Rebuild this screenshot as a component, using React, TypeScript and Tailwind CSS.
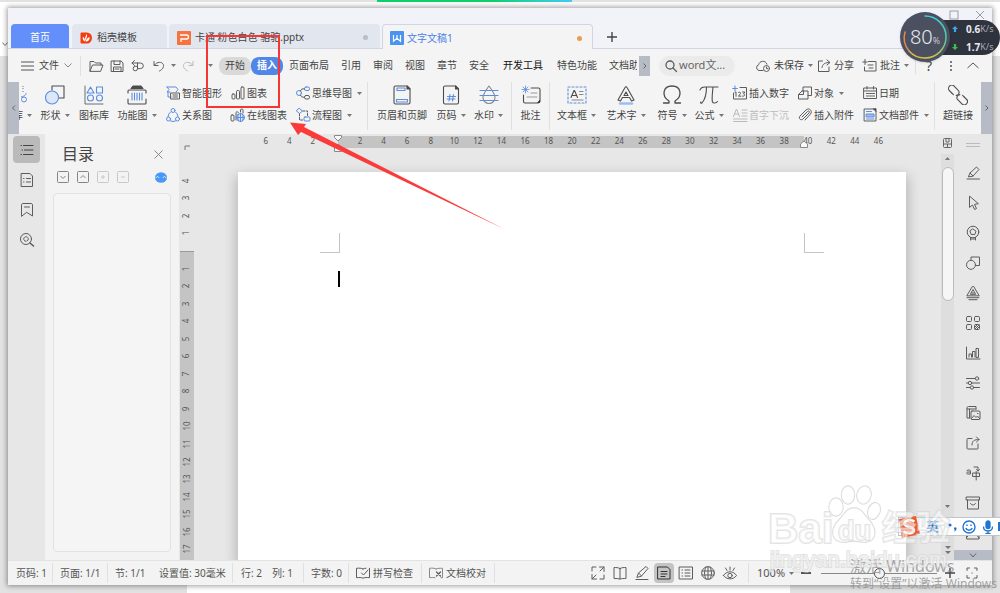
import React from "react";

type Kids = { children?: React.ReactNode };

/* 16-unit line icon */
function S({ children, className = "size-4" }: Kids & { className?: string }) {
  return (
    <svg viewBox="0 0 16 16" className={`shrink-0 ${className}`} fill="none" stroke="#5c5c5c" strokeWidth="1" strokeLinecap="round" strokeLinejoin="round" aria-hidden="true">
      {children}
    </svg>
  );
}

/* 20-unit line icon used by the tall ribbon buttons */
function L({ children }: Kids) {
  return (
    <svg viewBox="0 0 20 20" className="size-5 shrink-0" fill="none" stroke="#4c4c4c" strokeWidth="1.1" strokeLinecap="round" strokeLinejoin="round" aria-hidden="true">
      {children}
    </svg>
  );
}

const B = "#5b8de0";

function Caret() {
  return (
    <svg viewBox="0 0 5 3" className="ml-1 h-[3px] w-[5px] shrink-0" aria-hidden="true">
      <path d="M0 0h5L2.5 3z" fill="#777" />
    </svg>
  );
}

function Big({ icon, label, caret, w }: { icon: React.ReactNode; label: string; caret?: boolean; w: string }) {
  return (
    <button className={`flex shrink-0 flex-col items-center pt-[3px] ${w}`}>
      {icon}
      <span className="flex items-center leading-5 whitespace-nowrap">
        {label}
        {caret && <Caret />}
      </span>
    </button>
  );
}

function Small({ icon, label, caret, muted }: { icon: React.ReactNode; label: string; caret?: boolean; muted?: boolean }) {
  return (
    <button className={`flex h-[22px] items-center gap-px whitespace-nowrap ${muted ? "text-[#bdbdbd]" : ""}`}>
      {icon}
      {label}
      {caret && <Caret />}
    </button>
  );
}

function Stack({ children, w }: Kids & { w: string }) {
  return <div className={`flex shrink-0 flex-col ${w}`}>{children}</div>;
}

function Sep({ className = "h-12" }: { className?: string }) {
  return <div className={`w-px shrink-0 bg-[#e0e0e0] ${className}`} />;
}

/* ---------- tabs ---------- */
function TabBar() {
  return (
    <header className="flex h-[41px] shrink-0 items-end border-b border-[#cfd6e2] bg-[#f1f3f8] pl-[3px]">
      <button className="h-6 w-[58px] rounded-t bg-[#628ffa] pt-[3px] text-white">首页</button>
      <button className="ml-[3px] flex h-6 w-[95px] items-center gap-[5px] rounded-t bg-[#e2e6ef] pt-[3px] pl-2">
        <svg viewBox="0 0 12 12" className="size-3">
          <path d="M1.5.5H7a5 5.500 0 0 1 0 11H1.500a1 1 0 0 1-1-1v-9a1 1 0 0 1 1-1z" fill="#f23f10" />
          <path d="M6.500 2c1 1.800.6 3.500-.5 5L5 9.500C4 8.500 5.800 4 6.500 2zM3 4.800c1.300.7 1.700 2 1.700 4.400C3 8.500 2.300 6.800 3 4.800zM9.500 5c.5 2.500-1 4.500-3.800 4.500C6 7.500 7.500 5.800 9.500 5z" fill="#fff" />
        </svg>
        稻壳模板
      </button>
      <button className="ml-[2px] flex h-6 w-[211px] items-center gap-1 rounded-t bg-[#e2e6ef] pt-[3px] pr-3 pl-2">
        <svg viewBox="0 0 14 14" className="size-[14px]">
          <rect width="14" height="14" rx="1" fill="#f9713f" />
          <path d="M3 4h6.500a1.600 1.600 0 0 1 0 4H4v3" fill="none" stroke="#fff" strokeWidth="1.300" />
        </svg>
        卡通 粉色白色 骆驼.pptx
        <span className="ml-auto size-[5px] rounded-full bg-[#b9bec9]" />
      </button>
      <button className="ml-[2px] -mb-px flex h-[25px] w-[211px] items-center gap-[3px] rounded-t border border-b-0 border-[#cfd6e2] bg-[#f4f4f4] pt-[2px] pr-[10px] pl-[7px] text-[#4a80e8]">
        <svg viewBox="0 0 14 14" className="size-[14px]">
          <rect width="14" height="14" rx="1" fill="#4b93f0" />
          <path d="M3.500 4v6.200l3.500-3 3.500 3V4M7 4v3" fill="none" stroke="#fff" strokeWidth="1.200" />
        </svg>
        文字文稿1
        <span className="ml-auto size-[5px] rounded-full bg-[#eb9c50]" />
      </button>
      <button aria-label="新建" className="mb-[6px] ml-[14px]">
        <svg viewBox="0 0 10 10" className="size-[10px]"><path d="M5 0v10M0 5h10" stroke="#444" strokeWidth="1.400" /></svg>
      </button>
      <div className="mr-[7px] mb-auto ml-auto flex gap-4 pt-[2px]">
        <button aria-label="最大化"><svg viewBox="0 0 10 10" className="size-[10px]"><rect x="1" y="1" width="8" height="8" fill="none" stroke="#9a9da4" /></svg></button>
        <button aria-label="关闭"><svg viewBox="0 0 10 10" className="size-[10px]"><path d="M1 1l8 8M9 1L1 9" stroke="#9a9da4" /></svg></button>
      </div>
    </header>
  );
}

/* ---------- menu ---------- */
function MenuBar() {
  return (
    <nav className="flex h-[33px] shrink-0 items-center whitespace-nowrap">
      <button className="ml-[13px] flex items-center gap-[5px]">
        <svg viewBox="0 0 13 10" className="h-[10px] w-[13px]"><path d="M0 1h13M0 5h13M0 9h13" stroke="#555" /></svg>
        文件
        <svg viewBox="0 0 8 5" className="h-[5px] w-2"><path d="M.5.5L4 4 7.500.5" fill="none" stroke="#888" /></svg>
      </button>
      <Sep className="ml-2 h-5 bg-[#d5d5d5]" />
      <div className="ml-[7px] flex items-center gap-[5px]">
        <button aria-label="打开"><S><path d="M2 13V3.500h4l1.500 1.500H13v2M2 13l2.500-6H15l-2.300 6z" /></S></button>
        <button aria-label="保存"><S><path d="M2.500 3h9.500l2 2v8.500H2.500zM5 3v3.500h6V3M4.500 13.500V9h7.500v4.500M6 11h4" /></S></button>
        <button aria-label="输出"><S><path d="M2 5h8.500a2.800 2.800 0 0 1 0 5.600H7.500M4.500 2.500L2 5l2.500 2.500M7.500 5v5.600a2.200 2.200 0 1 1-2.200-2.200h2" /></S></button>
        <button aria-label="撤消"><S><path d="M3 3.500v4h4M3.500 7C6 3.500 11 3.500 12.300 6.500c1 2.500-.8 5-3.800 6.500" /></S></button>
      </div>
      <Caret />
      <button aria-label="恢复" className="ml-1"><S><path stroke="#bbb" d="M13 3.500v4H9M12.500 7C10 3.500 5 3.500 3.700 6.500c-1 2.500.8 5 3.800 6.500" /></S></button>
      <span className="ml-2"><Caret /></span>
      <div className="ml-[6px] flex items-center">
        <button className="h-[18px] w-8 rounded-lg bg-[#d9d9d9]">开始</button>
        <button className="h-[18px] w-8 rounded-lg bg-[#4f86e8] font-bold text-white">插入</button>
      </div>
      <div className="ml-[6px] flex items-center gap-3">
        <button>页面布局</button>
        <button>引用</button>
        <button>审阅</button>
        <button>视图</button>
        <button>章节</button>
        <button>安全</button>
        <button className="ml-[2px] text-[#111]">开发工具</button>
        <button className="ml-[2px]">特色功能</button>
        <button className="w-7 overflow-hidden">文档助手</button>
      </div>
      <button aria-label="更多选项卡" className="ml-[2px] flex h-5 w-[11px] items-center justify-center bg-[#b7bbc3]">
        <svg viewBox="0 0 4 6" className="h-[6px] w-1"><path d="M.5.5L3 3 .5 5.500" fill="none" stroke="#666" /></svg>
      </button>
      <label className="ml-[9px] flex h-5 w-[76px] items-center rounded-full bg-[#ebebeb] pl-1">
        <S><circle cx="7" cy="7" r="4" strokeWidth="1.300" /><path strokeWidth="1.300" d="M10 10l3.500 3.500" /></S>
        <input aria-label="搜索" defaultValue="word文..." className="w-12 bg-transparent text-[11px] text-[#666] outline-none" />
      </label>
      <div className="ml-auto flex items-center gap-[3px]">
        <button className="flex items-center gap-[3px]">
          <S><path d="M8 12.500H4a3 3 0 0 1-.3-5.800C4 3 10.500 1.500 12 6.200" /><circle cx="11.500" cy="10.500" r="3" /><path d="M11.500 9v1.700h1.300" /></S>
          <span className="flex items-center">未保存<Caret /></span>
        </button>
        <button className="flex items-center gap-[2px]">
          <S><path d="M6.500 3H2.500v10.500H13V9M6 9.500C6.500 6 9 4.500 13.500 4.500M11 2l3 2.500L11 7" /></S>分享
        </button>
        <button className="ml-[5px] flex items-center gap-[2px]">
          <S><path d="M6.500 3.500H14v9.500H2.500V9M6 7h5M7 10h4M3 1.500v5M.7 4h4.600" /></S>
          <span className="flex items-center">批注<Caret /></span>
        </button>
      </div>
      <Sep className="ml-[6px] h-4" />
      <button className="ml-[9px] w-2 text-sm">?</button>
      <button aria-label="更多" className="ml-[14px]"><svg viewBox="0 0 8 12" className="h-3 w-2" fill="#555"><circle cx="4" cy="2" r="1" /><circle cx="4" cy="6" r="1" /><circle cx="4" cy="10" r="1" /></svg></button>
      <button aria-label="收起功能区" className="mr-[13px] ml-3"><svg viewBox="0 0 12 7" className="h-[7px] w-3"><path d="M.5 6L6 1l5.500 5" fill="none" stroke="#555" /></svg></button>
    </nav>
  );
}

/* ---------- ribbon ---------- */
function Ribbon() {
  return (
    <section aria-label="插入" className="flex h-[52px] shrink-0 items-stretch overflow-hidden">
      <button aria-label="向左滚动" className="flex w-[11px] shrink-0 items-center justify-center bg-[#b7bbc6]">
        <svg viewBox="0 0 4 6" className="h-[6px] w-1"><path d="M3 .5L.5 3 3 5.500" fill="none" stroke="#666" /></svg>
      </button>
      <button aria-label="图库" className="flex w-4 shrink-0 flex-col pt-[3px]">
        <svg viewBox="0 0 10 20" className="h-5 w-[10px]" fill="none"><path d="M4 1v3M4 6v2" stroke="#777" strokeDasharray="1 1" /><circle cx="5" cy="14.500" r="2.500" stroke={B} /><path d="M7 8c0 2-1 3-5 4" stroke={B} /></svg>
        <span className="flex h-5 items-center"><span className="flex w-1 justify-end overflow-hidden">库</span><Caret /></span>
      </button>
      <Big w="w-10" label="形状" caret icon={<L><path d="M7 5V1h12v12h-5" /><circle cx="7" cy="12.500" r="6.500" fill="#dce8fa" stroke={B} /></L>} />
      <Big w="w-[38px]" label="图标库" icon={<L><path d="M1 1v18h18" strokeWidth=".8" /><g stroke={B}><path d="M6.500 2L10 8H3z" /><rect x="12.500" y="2" width="6" height="6" /><circle cx="6.500" cy="13" r="3" /><circle cx="15.500" cy="13" r="3" /></g></L>} />
      <Big w="w-12" label="功能图" caret icon={<L><path d="M4 3.500L6 1h8l2 2.500z" fill="#4c4c4c" /><path d="M1 8V6c0-.6.4-1 1-1h16c.6 0 1 .4 1 1v2M1 14v4c0 .6.4 1 1 1h16c.6 0 1-.4 1-1v-4" /><path stroke={B} d="M5 8v7M7.500 8v7M10 8v7M12.500 8v7M15 8v7" /></L>} />
      <Stack w="ml-1 w-[65px]">
        <Small label="智能图形" icon={<S><path stroke={B} d="M2 2h9l2 2.500L11 7M2 2l2 2.500L2 7h3M3 7v5h3" /><rect x="6" y="8" width="8.500" height="6" /><path d="M8 10h4.500M8 12h4.500" /></S>} />
        <Small label="关系图" icon={<S><path stroke={B} d="M5.500 5A6 6 0 0 0 3 9.500M10.500 5A6 6 0 0 1 13 9.500M5.500 14a6 6 0 0 0 5 0" /><circle cx="8" cy="3.500" r="2" stroke={B} /><circle cx="3.500" cy="12" r="2" stroke={B} /><circle cx="12.500" cy="12" r="2" stroke={B} /></S>} />
      </Stack>
      <Stack w="w-[65px]">
        <Small label="图表" icon={<S><rect x="2" y="9" width="3" height="5" rx="1" /><rect x="6.500" y="5.500" width="3" height="8.500" rx="1" /><rect x="11" y="2" width="3" height="12" rx="1" /></S>} />
        <Small label="在线图表" icon={<S><rect x="1" y="8" width="3" height="6" rx="1" /><path d="M6 13V5.500c0-1 2.500-1 2.500 0M10.500 5V3c0-1.300 2.500-1.300 2.500 0v3" /><g stroke={B}><circle cx="10.500" cy="10.500" r="4" fill="#dce8fa" /><path d="M6.500 10.500h8M10.500 6.500v8M8.500 7.500c-1 2-1 4 0 6M12.500 7.500c1 2 1 4 0 6" /></g></S>} />
      </Stack>
      <Stack w="w-[72px]">
        <Small label="思维导图" caret icon={<S><g stroke={B}><circle cx="4" cy="8" r="2.500" /><rect x="9.500" y="2" width="5" height="3.500" rx="1.500" /></g><rect x="9.500" y="10.500" width="5" height="3.500" rx="1.500" /><path d="M5.500 6C6 4 7 3.800 9.500 3.800M5.500 10c.5 2 1.500 2.300 4 2.300" /></S>} />
        <Small label="流程图" caret icon={<S><path stroke={B} d="M4.500 1.500l3 2.500-3 2.500-3-2.500z" /><path strokeDasharray="2 1.500" d="M4.500 7v6H9M8 4h4.500v5" /><rect x="9" y="10" width="6" height="4" rx="1" stroke={B} /></S>} />
      </Stack>
      <Sep />
      <Big w="ml-1 w-[60px]" label="页眉和页脚" icon={<L><path d="M2 2.500C2 1.500 2.500 1 3.500 1H15l3 3v13.500c0 1-.5 1.500-1.500 1.500h-13c-1 0-1.500-.5-1.500-1.500z" /><path d="M15 1l3 3h-3z" fill="#333" /><path stroke={B} d="M5 3h8v2.500H5zM4.500 14.500h11V17h-11z" /></L>} />
      <Big w="w-[38px]" label="页码" caret icon={<L><path d="M2.500 2.500C2.500 1.500 3 1 4 1h10.500l3 3v13.500c0 1-.5 1.500-1.500 1.500H4c-1 0-1.500-.5-1.500-1.500z" /><path d="M14.500 1l3 3h-3z" fill="#333" /><path stroke={B} d="M9 9.500L8 16M12.500 9.500l-1 6.500M6.500 11.500h8M6 14h8" /></L>} />
      <Big w="w-[37px]" label="水印" caret icon={<L><path stroke="#888" d="M10 1C6 6.500 4 9 4 12.500a6 6 0 0 0 12 0C16 9 14 6.500 10 1z" /><path stroke={B} d="M1 5.500h18M1 10.500h18M1 15.500h18" /></L>} />
      <Sep className="ml-1 h-12" />
      <Big w="w-[37px]" label="批注" icon={<L><path d="M10 3h7.500c1 0 1.500.5 1.500 1.500v12l-2 1.500H4c-1 0-1.500-.5-1.500-1.500V10" /><path d="M19 14.500L16 18h3z" fill="#333" stroke="none" /><path d="M10 8h6M6 12h10" stroke="#999" /><path stroke={B} d="M4.500 1v7M1 4.500h7M2 2l5 5M7 2L2 7" strokeWidth=".8" /></L>} />
      <Sep />
      <Big w="w-[53px]" label="文本框" caret icon={<L><rect x="1" y="2" width="18" height="16" stroke={B} strokeDasharray="2 2" /><path d="M4 12.500L7 5.500h.5l3 7M5 10.500h4.500" /><path stroke="#888" d="M12.500 6.500H16M12.500 9.500H16M5 15h11" /></L>} />
      <Big w="w-[46px]" label="艺术字" caret icon={<L><path d="M2 15L9 2.500c.5-1 1.500-1 2 0L18 15l-2.500 1-2-3.500h-7l-2 3.500zM8 10.500h4L10 7z" /><path stroke="#9dbdf0" strokeWidth="2.500" d="M4 18.500h12" /></L>} />
      <Big w="w-[46px]" label="符号" caret icon={<L><path strokeWidth="1.300" d="M1.500 18H7v-2C-1 11 1 1 10 1s11 10 3 15v2h5.500" /></L>} />
      <Big w="w-7" label="公式" caret icon={<L><path d="M1 5c1-3 3-3 5-3h13M7.500 2c0 8-1 12-4.500 16-1 .8-2-.5-1-1M14 2c-.5 6-1.500 12-.5 15 .7 1.500 3.500 1.500 5-.5" /></L>} />
      <Stack w="ml-[9px] w-[65px]">
        <Small label="插入数字" icon={<S><path stroke={B} d="M3 1v5M.7 3.500h4.600" /><path d="M8 2.500h6.500V14h-13V8M3 7.500l1-.7v4.500M6.500 7.500c1-1 2.500 0 2 1l-2 2.700h2.300M10.500 7h2.300L11.500 9c2 0 1.500 2.700-1 2.200" /></S>} />
        <Small muted label="首字下沉" icon={<S><g stroke="#bbb"><path d="M1.500 9.500L4.500 2l3 7.500M2.700 7h3.700M10 3h5M10 6h5M10 9h5M1.500 12h13.500M1.500 14.500h13.500" /></g></S>} />
      </Stack>
      <Stack w="w-[65px]">
        <Small label="对象" caret icon={<S><path d="M6 6V2h8.500v8.500H11" /><path d="M5 6h6v8H1.500V9.500h5V6M1.500 9.500L5 6" /></S>} />
        <Small label="插入附件" icon={<S><path d="M5 10l5.500-5.500c1.300-1.300 2.500.3 1.500 1.500l-6 6c-2 2-5-.5-3-3l6-6c3-3 7 1 4.500 4L8 13" /></S>} />
      </Stack>
      <Stack w="w-[72px]">
        <Small label="日期" icon={<S><path d="M2 3h12.500v10.500H2zM2 6h12.500M5 1.500v2.500M11.500 1.500v2.500M4.500 8.500h2M7.500 8.500h2M10.500 8.500h2M4.500 11h2M7.500 11h2M10.500 11h2" /></S>} />
        <Small label="文档部件" caret icon={<S><path d="M2.500 2H12l2 2v10H2.500z" /><path fill="#333" d="M11.500 2l2.500 2.500V2z" /><rect x="4.500" y="7" width="7.500" height="3" fill="#9dbdf0" stroke={B} /><path stroke={B} d="M4.500 4.500h5M4.500 12h7.500" /></S>} />
      </Stack>
      <Sep />
      <Big w="w-[46px]" label="超链接" icon={<L><g transform="rotate(45 10 10)"><path d="M4 13H1a3 3 0 0 1 0-6.500h5.500a3 3 0 0 1 2.500 5" /><path d="M16 7h3a3 3 0 0 1 0 6.500h-5.500a3 3 0 0 1-2.500-5" /><path d="M4 13h2.500M16 7h-2.500" /></g></L>} />
      <button aria-label="向右滚动" className="ml-auto flex w-[11px] shrink-0 items-center justify-center bg-[#b7bbc6]">
        <svg viewBox="0 0 4 6" className="h-[6px] w-1"><path d="M.5.5L3 3 .5 5.500" fill="none" stroke="#666" /></svg>
      </button>
    </section>
  );
}

/* ---------- left side ---------- */
function LeftRail() {
  return (
    <aside className="flex w-[37px] shrink-0 flex-col items-center gap-[3px] bg-[#e7e7e7] pt-[2px]">
      <button aria-label="目录" className="flex size-[27px] items-center justify-center rounded bg-[#bababa]"><S><path stroke="#444" d="M4.500 3.500H14M5.500 8H14M4.500 12.500H14M2 3.500h.5M3 8h.5M2 12.500h.5" /></S></button>
      <button aria-label="章节" className="flex size-[27px] items-center justify-center"><S><path d="M2.500 1.500H11l2.500 2.500v10.500h-11zM7.500 6.500h4M7.500 10h4M4.500 6.500H5M4.500 10H5" /></S></button>
      <button aria-label="书签" className="flex size-[27px] items-center justify-center"><S><path d="M2.500 14V3c0-1 .5-1.500 1.500-1.500h8c1 0 1.500.5 1.500 1.500v11L8 10.500zM5.500 5h5" /></S></button>
      <button aria-label="查找" className="flex size-[27px] items-center justify-center"><S><circle cx="7" cy="7" r="5.500" /><circle cx="7" cy="7" r="2.300" strokeDasharray="2 1" /><path strokeWidth="1.600" d="M11 11l3.500 3" /></S></button>
    </aside>
  );
}

function BoxBtn({ label, d, faded }: { label: string; d: string; faded?: boolean }) {
  return (
    <button aria-label={label}>
      <svg viewBox="0 0 12 12" className="size-3" fill="none" stroke={faded ? "#c8c8c8" : "#858585"}>
        <rect x=".5" y=".5" width="11" height="11" rx="1" />
        <path d={d} />
      </svg>
    </button>
  );
}

function Outline() {
  return (
    <section className="flex w-[134px] shrink-0 flex-col bg-[#f3f3f3] px-2 pb-2">
      <div className="flex h-[38px] items-center justify-between pt-[2px] pr-2 pl-[9px]">
        <h2 className="text-base text-[#444]">目录</h2>
        <button aria-label="关闭目录"><svg viewBox="0 0 9 9" className="size-[9px]"><path d="M.5.5l8 8M8.500.5l-8 8" stroke="#888" /></svg></button>
      </div>
      <div className="mb-[11px] flex h-[10px] items-center gap-2 pr-1 pl-1">
        <BoxBtn label="展开" d="M3.500 5L6 7.500 8.500 5" />
        <BoxBtn label="折叠" d="M3.500 7L6 4.500 8.500 7" />
        <BoxBtn label="添加" d="M6 4v4M4 6h4" faded />
        <BoxBtn label="减少" d="M4 6h4" faded />
        <button aria-label="智能识别" className="ml-auto">
          <svg viewBox="0 0 12 11" className="h-[11px] w-3"><ellipse cx="6" cy="5.500" rx="6" ry="5.300" fill="#4a98f5" /><path d="M1 6c1-2 2-2 3 0M8 6c1-2 2-2 3 0" stroke="#fff" fill="none" strokeWidth=".8" /></svg>
        </button>
      </div>
      <div className="flex-1 rounded border border-[#e2e2e2] bg-[#f5f5f5]" />
    </section>
  );
}

const across = Array.from({ length: 27 }, (_, i) => Math.abs(i * 2 - 6));
const down = Array.from({ length: 22 }, (_, i) => Math.abs(i - 4));

function VerticalRuler() {
  return (
    <div className="relative w-[15px] shrink-0 overflow-hidden bg-[#e7e7e7] text-[8px] text-[#555]">
      <div className="absolute top-[117px] right-0 bottom-0 left-px border-t border-[#999] bg-[#c4c4c4]" />
      <div className="relative pt-[38px]">
        <svg viewBox="0 0 6 6" className="absolute top-[11px] left-[5px] size-[6px]"><path d="M1 5V1h5" stroke="#777" fill="none" /></svg>
        <div className="flex h-[386px] flex-col">
          {down.map((n, i) => (
            <span key={i} className="flex flex-1 items-center justify-center"><span className="-rotate-90">{n || ""}</span></span>
          ))}
        </div>
      </div>
    </div>
  );
}

function Editor() {
  return (
    <main className="flex min-w-0 flex-1 flex-col overflow-hidden bg-[#e7e7e7]">
      <div className="relative h-[14px] shrink-0 text-[8px] leading-[14px] text-[#555]">
        <div className="absolute top-[2px] right-[137px] bottom-0 left-[144px] bg-[#c4c4c4]" />
        <div className="relative ml-[60px] flex w-[636px]">
          {across.map((n, i) => <span key={i} className="flex-1 text-center">{n || ""}</span>)}
        </div>
        <svg viewBox="0 0 8 17" className="absolute top-px left-[140px] h-[17px] w-2" fill="#f8f8f8" stroke="#888"><path d="M.5.5h7v2L4 6 .5 2.500zM4 9l3.500 3v4.500h-7V12z" /></svg>
        <svg viewBox="0 0 8 8" className="absolute top-[6px] right-[133px] size-2" fill="#f8f8f8" stroke="#888"><path d="M4 1l3.500 3v3.500h-7V4z" /></svg>
      </div>
      <div className="flex flex-1 flex-col pt-6 pr-[35px] pl-11">
        <article className="flex-1 bg-white pt-[61px] shadow-[0_6px_12px_2px_rgba(0,0,0,0.22)]">
          <div className="flex justify-between px-[82px]">
            <div className="size-5 border-r border-b border-[#c4c4c4]" />
            <div className="size-5 border-b border-l border-[#c4c4c4]" />
          </div>
          <div className="mt-[18px] ml-[100px] h-4 w-[2px] bg-black" />
        </article>
      </div>
    </main>
  );
}

function Scrollbar() {
  return (
    <div className="flex w-[13px] shrink-0 flex-col items-center bg-[#dedede]">
      <div className="flex h-5 w-full justify-center bg-[#e7e7e7] pt-1"><svg viewBox="0 0 9 10" className="h-[10px] w-[9px]" fill="none" stroke="#666"><rect x=".5" y=".5" width="8" height="9" rx="1" /><path d="M.5 6h8M3 1v3h3V1M4.500 6v3" /></svg></div>
      <svg viewBox="0 0 5 3" className="mt-[3px] h-[3px] w-[5px]"><path d="M0 3h5L2.500 0z" fill="#777" /></svg>
      <div className="mt-[7px] h-[134px] w-3 rounded-full border border-[#bbb] bg-[#f6f6f6]" />
      <svg viewBox="0 0 5 3" className="mt-auto h-[3px] w-[5px]"><path d="M0 0h5L2.500 3z" fill="#777" /></svg>
      <svg viewBox="0 0 6 8" className="mt-[38px] mb-[6px] h-2 w-[6px]"><path d="M0 0h6L3 3zM0 5h6L3 8z" fill="#777" /></svg>
    </div>
  );
}

const tools: [string, React.ReactNode][] = [
  ["样式", <path d="M2 14h12.500M3.500 11.500L5 8l6.500-6 2.500 2.500-6 6.500zM5 8l3 3" />],
  ["选择", <path d="M4.500 1.500v11l3-2.500 2 4.500 2-1-2-4.200 3.500-.5z" />],
  ["稻壳", <><circle cx="8" cy="7" r="5.800" /><path d="M8 4l3 2.200-1.200 3.300H6.200L5 6.200zM5.500 12.500v2.500M10.500 12.500v2.500M6 14h4" /></>],
  ["形状", <><path d="M6 5V2h8.500v8.500H11" /><circle cx="6" cy="9.800" r="4.500" /></>],
  ["艺术字", <path d="M2 10.500L7.300 1.500h1.400L14 10.500zM5.500 9L8 4.500 10.500 9zM7 8h2M2 12.700h12M4 14.700h8" />],
  ["组件", <><rect x="1.500" y="1.500" width="5" height="5" rx="1" /><rect x="9.500" y="1.500" width="5" height="5" rx="1" /><rect x="1.500" y="9.500" width="5" height="5" rx="1" /><rect x="9.500" y="9.500" width="5" height="5" rx="1" /><path d="M10 14l4-4M10 12l2-2M12 14l2-2" /></>],
  ["图表", <path d="M1.500 2v12h13.500M4 12V9h2.500v3M7.500 12V6.500H10V12M11 12V3.500h2.500V12z" />],
  ["设置", <><path d="M1.500 3.500H10M1.500 8H3M7 8h7.500M1.500 12.500H5M9 12.500h5.500" /><circle cx="12" cy="3.500" r="1.700" /><circle cx="5" cy="8" r="1.700" /><circle cx="7" cy="12.500" r="1.700" /></>],
  ["图片", <><path d="M4.500 13H2V3c0-1 .5-1.500 1.500-1.500H11V4M2 4h9M4.500 4v9" /><rect x="6" y="6" width="9" height="8.500" rx="1" /><path d="M6.500 13.500l2.500-3 2 2 1.500-1.500 2 2.500M12.500 8.500h.5" /></>],
  ["分享", <path d="M7 3.500H3c-1 0-1 .5-1 1V13c0 1 .5 1 1 1h9c1 0 1 0 1-1V9M7 10c0-4 2-5.500 7-5.500M11.500 2L14 4.500 11.500 7" />],
  ["翻译", <path d="M2 5.500c1.500-1 3.500-.7 3.500.7V9H3C1 9 1.500 7 3 7h2.500M9 2h4v4M11.500 4.500L13 6l1.500-1.500M8 8h6.500v3.500H8zM11.200 6.500v8.500" />],
  ["归档", <path d="M1.500 2h13v3h-13zM2.500 5v9h11V5M5.500 8.500c.5 2 4.500 2 5 0" />],
];

function RightRail() {
  return (
    <aside className="flex w-[38px] shrink-0 flex-col items-center overflow-hidden bg-[#e7e7e7]">
      <svg viewBox="0 0 14 4" className="mt-[9px] mb-[11px] h-1 w-[14px] shrink-0"><path d="M0 .5h14M0 3.500h14" stroke="#bbb" /></svg>
      <div className="flex min-h-0 flex-1 flex-col overflow-hidden">
        {tools.map(([name, art]) => (
          <button key={name} aria-label={name} className="flex h-[30px] w-8 shrink-0 items-center justify-center"><S>{art}</S></button>
        ))}
        <button aria-label="图库" className="flex h-[30px] w-8 shrink-0 items-center justify-center"><S><path d="M2 2h12v12H2zM2 12l4-4 3 3 2-2 3 4" /></S></button>
      </div>
      <button aria-label="更多工具" className="flex h-[10px] w-full shrink-0 items-center justify-center bg-[#b7bbc6]"><svg viewBox="0 0 8 5" className="h-[5px] w-2"><path d="M1 .5L4 4 7 .5" fill="none" stroke="#666" /></svg></button>
    </aside>
  );
}

/* ---------- status bar ---------- */
function StatusBar() {
  const sep = "h-5 bg-[#e0e0e0]";
  return (
    <footer className="flex h-[25px] shrink-0 items-center border-t border-[#e3e3e3] bg-[#f3f3f3] pr-3 pl-2 whitespace-nowrap text-[#555]">
      <span className="w-9">页码: 1</span><Sep className={sep} />
      <span className="w-[54px] pl-[7px]">页面: 1/1</span><Sep className={sep} />
      <span className="w-11 pl-[7px]">节: 1/1</span>
      <span className="w-20 pl-[7px]">设置值: 30毫米</span><Sep className={sep} />
      <span className="w-8 pl-2">行: 2</span>
      <span className="w-[38px] pl-[7px]">列: 1</span><Sep className={sep} />
      <span className="w-11 pl-[7px]">字数: 0</span><Sep className={sep} />
      <button className="flex w-[72px] items-center gap-[2px] pl-[6px]"><S><path d="M8 4C6.500 3 4 3 1.500 3.300v9.400c2.500-.3 5-.3 6.500.5 1.500-.8 4-.8 6.500-.5V3.300M8 4c.8-.5 2-.8 3-.8M6.500 8l2 2 4.500-5" /></S>拼写检查</button><Sep className={sep} />
      <button className="flex w-[72px] items-center gap-[2px] pl-[6px]"><S><path stroke="#888" d="M8 4C6.500 3 4 3 1.500 3.300v9.400c2.500-.3 4-.3 5.500 0M8 4c1.500-.8 4-.8 6.500-.7v9.400h-1.500" /><path d="M8.500 7l4 4M12.500 7l-4 4" strokeWidth="1.300" /></S>文档校对</button><Sep className={sep} />
      <div className="ml-auto flex items-center gap-[2px]">
        {([
          ["全屏", <path d="M9.500 2H14v4.500M14 2l-4 4M6.500 14H2V9.500M2 14l4-4M2 6V2h4M14 10v4h-4" />],
          ["阅读", <path d="M8 3.500C6.500 2.500 4 2.500 2 2.500v11c2 0 4.500 0 6 .5 1.500-.5 4-.5 6-.5v-11c-2 0-4.500 0-6 1zM8 3.500V14" />],
          ["写作", <path d="M2 14.500h12M3 12l1.500-4L12 1.500l2 2L7.500 11zM4.500 8l3 3" />],
          ["页面视图", <path stroke="#333" d="M2 2h9.500L14 4.500V14H2zM5 6.500h6M5 9h6M5 11.500h4" />],
          ["大纲", <path d="M1.500 2h13v12h-13zM7 5h5M7 8h5M7 11h5M4 5h.5M4 8h.5M4 11h.5" />],
          ["网页", <><circle cx="8" cy="8" r="6.300" /><path d="M2 6h12M2 10h12M8 1.700v12.600M6 2c-2 4-2 8 0 12M10 2c2 4 2 8 0 12" /></>],
          ["护眼", <><path d="M1.500 10.500c3-5 10-5 13 0-3 4.500-10 4.500-13 0z" /><circle cx="8" cy="10.500" r="2.200" /><path d="M8 2v3M3.500 3l1.500 2.500M12.500 3L11 5.500" /></>],
        ] as [string, React.ReactNode][]).map(([name, art]) => (
          <button key={name} aria-label={name} className={`flex size-5 items-center justify-center rounded-sm ${name === "页面视图" ? "bg-[#c4c4c4]" : ""}`}><S>{art}</S></button>
        ))}
      </div>
      <Sep className="ml-2 h-5 bg-[#e0e0e0]" />
      <button className="ml-2 flex w-[38px] items-center text-[11px]">100%<Caret /></button>
      <button aria-label="缩小" className="ml-[6px] h-[2px] w-[10px] bg-[#555]" />
      <label className="relative ml-[10px] flex h-4 w-[116px] items-center">
        <input type="range" aria-label="缩放" min="0" max="100" defaultValue="50" className="h-px w-full appearance-none bg-[#888] [&::-webkit-slider-thumb]:size-[11px] [&::-webkit-slider-thumb]:appearance-none [&::-webkit-slider-thumb]:rounded-full [&::-webkit-slider-thumb]:border [&::-webkit-slider-thumb]:border-[#555] [&::-webkit-slider-thumb]:bg-[#f3f3f3]" />
      </label>
      <button aria-label="放大" className="ml-2"><svg viewBox="0 0 10 10" className="size-[10px]"><path d="M5 0v10M0 5h10" stroke="#444" strokeWidth="1.400" /></svg></button>
      <button aria-label="适合页面" className="ml-[9px]"><S><path d="M3 5.500V3h2.500M10.500 3H13v2.500M13 10.500V13h-2.500M5.500 13H3v-2.500M8 8h.3" /></S></button>
    </footer>
  );
}

/* ---------- floating layers ---------- */
function SpeedWidget() {
  return (
    <div className="absolute top-3 right-0 h-[50px] w-[100px] text-[#e8eaee]">
      <div className="absolute top-2 right-0 flex h-[35px] w-[66px] flex-col justify-center rounded-r-full bg-[#2f333e] pl-[18px] text-[10px] leading-[18px]">
        {[["M4 0l4 4H5.500v4h-3V4H0z", "#3fa7ee", "0.6"], ["M4 8l4-4H5.500V0h-3v4H0z", "#3cbf4a", "1.7"]].map(([d, c, v]) => (
          <span key={v} className="flex items-center">
            <svg viewBox="0 0 8 8" className="size-[6px] shrink-0"><path d={d} fill={c} /></svg>
            <b className="ml-2 text-[10px]">{v}</b><span className="text-[9px] text-[#a4a8b2]">K/s</span>
          </span>
        ))}
      </div>
      <div className="absolute top-0 left-0 flex size-[50px] items-center justify-center rounded-full bg-[#4a5060] shadow">
        <svg viewBox="0 0 50 50" className="absolute inset-0" fill="none" strokeWidth="1.500" strokeLinecap="round">
          <defs><linearGradient id="ring" x1="0" y1="0" x2="0" y2="1"><stop offset="0" stopColor="#41cfd4" /><stop offset=".55" stopColor="#55c6a5" /><stop offset="1" stopColor="#d3c048" /></linearGradient></defs>
          <path d="M25 4a21 21 0 0 1 0 42" stroke="url(#ring)" />
          <path d="M25 46A21 21 0 0 1 9 39" stroke="#dcb845" />
          <path d="M9 39a21 21 0 0 1-4-19" stroke="#e5894b" />
        </svg>
        <span className="relative text-[20px] leading-none font-light">80<span className="text-[9px]">%</span></span>
      </div>
    </div>
  );
}

function ImeBar() {
  return (
    <div className="absolute right-0 bottom-[57px] flex h-[19px] w-[102px] items-center border border-r-0 border-[#bfc5cc] bg-white text-[13px] font-bold text-[#1f75cf]">
      <svg viewBox="0 0 26 26" className="-ml-[3px] size-[26px] shrink-0"><path d="M3 5L20 2l4 18-18 4z" fill="#f1582c" /><path d="M18.500 7.500C14 5 8 6.500 8.500 10s9.500 2.500 9.500 6-6.500 4.500-10.500 1.500" fill="none" stroke="#fff" strokeWidth="2.500" /></svg>
      <span className="ml-1 w-[14px]">英</span>
      <svg viewBox="0 0 10 10" className="ml-2 size-[10px] shrink-0" fill="#1f75cf"><circle cx="2" cy="3" r="1.600" /><path d="M6 5.500h2.500c.5 2-.5 3.500-2.500 4l1-2H6z" /></svg>
      <svg viewBox="0 0 14 14" className="ml-1 size-[14px] shrink-0" fill="none" stroke="#1f75cf" strokeWidth="1.400"><circle cx="7" cy="7" r="6" /><path d="M5 4.500v1.500M9 4.500v1.500M3.800 8c1 3 5.400 3 6.400 0" /></svg>
      <svg viewBox="0 0 12 14" className="ml-[6px] h-[14px] w-3 shrink-0" fill="none" stroke="#1f75cf" strokeWidth="1.300"><rect x="4" y="1" width="4" height="7.500" rx="2" fill="#1f75cf" /><path d="M1.500 6.500c0 6 9 6 9 0M6 11v2.500M3.500 13.300h5" /></svg>
      <span className="ml-auto h-[9px] w-[2px] bg-[#1f75cf]" />
    </div>
  );
}

function Activation() {
  return (
    <div className="pointer-events-none absolute right-0 bottom-0 w-[150px] overflow-hidden whitespace-nowrap text-[#8f8f8f]/80">
      <p className="text-base leading-[18px]">激活 Windows</p>
      <p className="text-xs leading-[18px]">转到“设置”以激活 Windows</p>
    </div>
  );
}

function Watermark() {
  return (
    <div className="pointer-events-none absolute right-[50px] bottom-[22px] h-[86px] w-[182px] leading-none font-bold text-white/50 [-webkit-text-stroke:2px_#d0d0d090] [paint-order:stroke_fill]">
      <span className="absolute bottom-[21px] left-0 font-['Liberation_Sans'] text-[42px]">Bai</span>
      <svg viewBox="0 0 54 60" className="absolute top-0 left-[59px] h-[60px] w-[54px]" fill="#fff" fillOpacity=".6" stroke="#d6d6d6" strokeWidth="1.300">
        <ellipse cx="9" cy="22" rx="7" ry="9" /><ellipse cx="21" cy="10" rx="6.500" ry="9" /><ellipse cx="37" cy="10" rx="7" ry="9" transform="rotate(12 37 10)" /><ellipse cx="47" cy="26" rx="6" ry="8.500" transform="rotate(20 47 26)" />
        <path d="M27 23c8 0 10 7 16 13 6 7 8 20-4 21-5 .3-8-1-12-1s-7 1.300-12 1C3 56 4 43 11 36c6-6 8-13 16-13z" />
      </svg>
      <span className="absolute bottom-[26px] left-[70px] font-['Liberation_Sans'] text-[27px]">du</span>
      <span className="absolute bottom-[27px] left-[114px] text-[34px] whitespace-nowrap">经验</span>
      <span className="absolute bottom-0 left-[2px] font-['Liberation_Sans'] text-[22px] font-normal">jingyan.baidu.com</span>
    </div>
  );
}

export default function App() {
  return (
    <div className="relative flex h-screen flex-col overflow-hidden bg-[#e2e2e2] px-2 pt-2 pb-2 font-['Noto_Sans','Noto_Sans_CJK_SC',sans-serif] text-[10px] text-[#444]">
      <div className="absolute inset-x-0 top-[2px] h-[54px] bg-white" />
      <div className="absolute top-0 left-[377px] h-[2px] w-[195px] bg-linear-to-r from-[#0ed06a] from-60% to-[#45c8f5]" />
      <div className="absolute right-[210px] bottom-0 left-[187px] h-[10px] bg-white" />
      <svg viewBox="0 0 6 5" className="absolute top-[42px] left-[2px] h-[5px] w-[6px]"><path d="M.5.5L3 3.500 5.500.5" fill="none" stroke="#777" /></svg>
      <div className="relative flex min-h-0 flex-1 flex-col bg-[#f4f4f4] shadow-[0_0_5px_1px_rgba(0,0,0,0.4)]">
        <TabBar />
        <MenuBar />
        <Ribbon />
        <div className="flex min-h-0 flex-1">
          <LeftRail />
          <Outline />
          <VerticalRuler />
          <Editor />
          <Scrollbar />
          <RightRail />
        </div>
        <StatusBar />
      </div>
      <ImeBar />
      <Activation />
      <Watermark />
      <SpeedWidget />
      <div className="pointer-events-none absolute top-[35px] left-[206px] h-[73px] w-[74px] border-2 border-[#f73535]" />
      <svg viewBox="0 0 214 107" className="pointer-events-none absolute top-[122px] left-[290px] h-[107px] w-[214px]"><path d="M0 .5L16 2l-2 3 200 102L11 10l-3 3z" fill="#fb3b3b" /></svg>
    </div>
  );
}
